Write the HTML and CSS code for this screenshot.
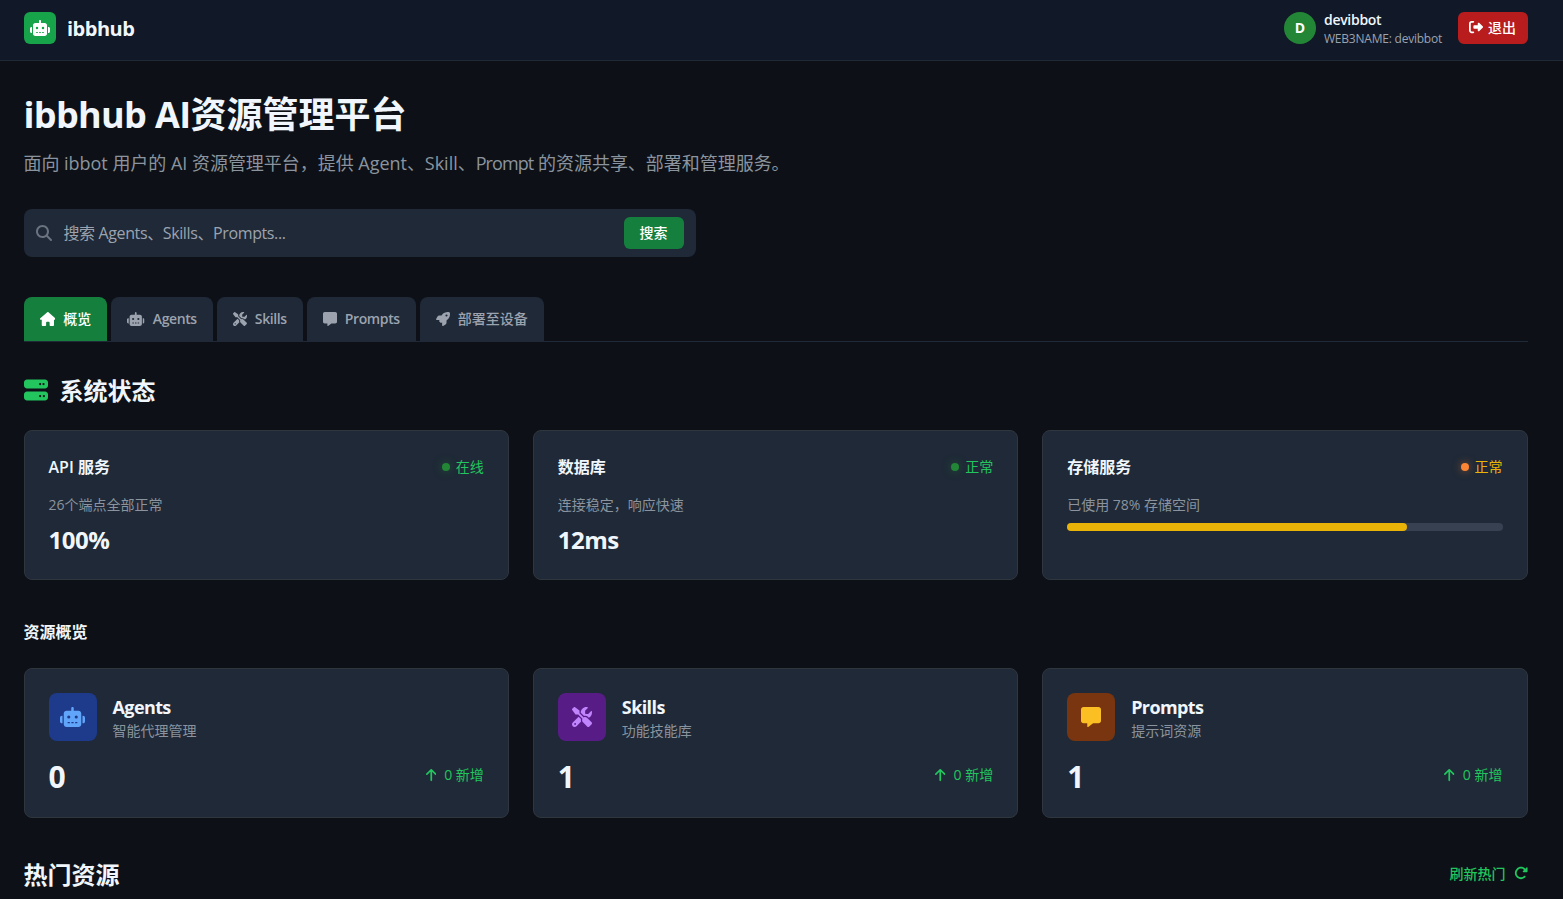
FILE: index.html
```
<!DOCTYPE html>
<html lang="zh-CN">

<head>
  <meta charset="UTF-8">
  <meta name="viewport" content="width=device-width, initial-scale=1.0">
  <title>ibbhub AI资源管理平台</title>
  <link rel="stylesheet" href="styles.css">
</head>

<body>
  <!-- icons -->
  <svg class="sprite" aria-hidden="true">
    <symbol id="robot" viewBox="0 0 640 512"><path d="M320 0c17.7 0 32 14.3 32 32V96H472c39.8 0 72 32.2 72 72V440c0 39.8-32.2 72-72 72H168c-39.8 0-72-32.2-72-72V168c0-39.8 32.2-72 72-72H288V32c0-17.7 14.3-32 32-32zM208 384c-8.8 0-16 7.2-16 16s7.2 16 16 16h32c8.8 0 16-7.2 16-16s-7.2-16-16-16H208zm96 0c-8.8 0-16 7.2-16 16s7.2 16 16 16h32c8.8 0 16-7.2 16-16s-7.2-16-16-16H304zm96 0c-8.8 0-16 7.2-16 16s7.2 16 16 16h32c8.8 0 16-7.2 16-16s-7.2-16-16-16H400zM264 256a40 40 0 1 0 -80 0 40 40 0 1 0 80 0zm152 40a40 40 0 1 0 0-80 40 40 0 1 0 0 80zM48 224H64V416H48c-26.5 0-48-21.5-48-48V272c0-26.5 21.5-48 48-48zm544 0c26.5 0 48 21.5 48 48v96c0 26.5-21.5 48-48 48H576V224h16z"/></symbol>
    <symbol id="logout" viewBox="0 0 512 512"><path d="M377.9 105.9L500.7 228.7c7.2 7.2 11.3 17.1 11.3 27.3s-4.1 20.1-11.3 27.3L377.9 406.1c-6.4 6.4-15 9.9-24 9.9c-18.7 0-33.9-15.2-33.9-33.9l0-62.1-128 0c-17.7 0-32-14.3-32-32l0-64c0-17.7 14.3-32 32-32l128 0 0-62.1c0-18.7 15.2-33.9 33.9-33.9c9 0 17.6 3.6 24 9.9zM160 96L96 96c-17.7 0-32 14.3-32 32l0 256c0 17.7 14.3 32 32 32l64 0c17.7 0 32 14.3 32 32s-14.3 32-32 32l-64 0c-53 0-96-43-96-96L0 128C0 75 43 32 96 32l64 0c17.7 0 32 14.3 32 32s-14.3 32-32 32z"/></symbol>
    <symbol id="search" viewBox="0 0 512 512"><path d="M416 208c0 45.9-14.9 88.3-40 122.7L502.6 457.4c12.5 12.5 12.5 32.8 0 45.3s-32.8 12.5-45.3 0L330.7 376c-34.4 25.2-76.8 40-122.7 40C93.1 416 0 322.9 0 208S93.1 0 208 0S416 93.1 416 208zM208 352a144 144 0 1 0 0-288 144 144 0 1 0 0 288z"/></symbol>
    <symbol id="home" viewBox="0 0 576 512"><path d="M575.8 255.5c0 18-15 32.1-32 32.1h-32l.7 160.2c0 2.7-.2 5.4-.5 8.1V472c0 22.1-17.9 40-40 40H456c-1.1 0-2.2 0-3.3-.1c-1.4 .1-2.8 .1-4.2 .1H416 392c-22.1 0-40-17.9-40-40V448 384c0-17.7-14.3-32-32-32H256c-17.7 0-32 14.3-32 32v64 24c0 22.1-17.9 40-40 40H160 128.1c-1.5 0-3-.1-4.5-.2c-1.2 .1-2.4 .2-3.6 .2H104c-22.1 0-40-17.9-40-40V360c0-.9 0-1.9 .1-2.8V287.6H32c-18 0-32-14-32-32.1c0-9 3-17 10-24L266.4 8c7-7 15-8 22-8s15 2 21 7L564.8 231.5c8 7 12 15 11 24z"/></symbol>
    <symbol id="tools" viewBox="0 0 512 512"><path d="M78.6 5C69.1-2.4 55.6-1.5 47 7L7 47c-8.5 8.5-9.4 22-2.1 31.6l80 104c4.5 5.9 11.6 9.4 19 9.4h54.1l109 109c-14.7 29-10 65.4 14.3 89.6l112 112c12.5 12.5 32.8 12.5 45.3 0l64-64c12.5-12.5 12.5-32.8 0-45.3l-112-112c-24.2-24.2-60.6-29-89.6-14.3l-109-109V104c0-7.5-3.5-14.5-9.4-19L78.6 5zM19.9 396.1C7.2 408.8 0 426.1 0 444.1C0 481.6 30.4 512 67.9 512c18 0 35.3-7.2 48-19.9L233.7 374.3c-7.8-20.9-9-43.6-3.6-65.1l-61.7-61.7L19.9 396.1zM512 144c0-10.5-1.1-20.7-3.2-30.5c-2.4-11.2-16.1-14.1-24.2-6l-63.9 63.9c-3 3-7.1 4.7-11.3 4.7H352c-8.8 0-16-7.2-16-16V102.6c0-4.2 1.7-8.3 4.7-11.3l63.9-63.9c8.1-8.1 5.2-21.8-6-24.2C388.7 1.1 378.5 0 368 0C288.5 0 224 64.5 224 144l0 .8 85.3 85.3c36-9.1 75.8 .5 104 28.7L429 274.5c49-23 83-72.8 83-130.5zM56 432a24 24 0 1 1 48 0 24 24 0 1 1 -48 0z"/></symbol>
    <symbol id="message" viewBox="0 0 512 512"><path d="M64 0C28.7 0 0 28.7 0 64V352c0 35.3 28.7 64 64 64h96v80c0 6.1 3.4 11.6 8.8 14.3s11.9 2.1 16.8-1.5L309.3 416H448c35.3 0 64-28.7 64-64V64c0-35.3-28.7-64-64-64H64z"/></symbol>
    <symbol id="rocket" viewBox="0 0 512 512"><path d="M156.6 384.9L125.7 354c-8.5-8.5-11.5-20.8-7.7-32.2c3-8.9 7-20.5 11.8-33.8L24 288c-8.6 0-16.6-4.6-20.9-12.1s-4.2-16.7 .2-24.1l52.5-88.5c13-21.9 36.5-35.3 61.9-35.3l82.3 0c2.4-4 4.8-7.7 7.2-11.3C289.1-4.1 411.1-8.1 483.9 5.3c11.6 2.1 20.6 11.2 22.8 22.8c13.4 72.9 9.3 194.8-111.4 276.7c-3.5 2.4-7.3 4.8-11.3 7.2v82.3c0 25.4-13.4 49-35.3 61.9l-88.5 52.5c-7.4 4.4-16.6 4.5-24.1 .2s-12.1-12.2-12.1-20.9V380.8c-14.1 4.9-26.4 8.9-35.7 11.9c-11.2 3.6-23.4 .5-31.8-7.8zM384 168a40 40 0 1 0 0-80 40 40 0 1 0 0 80z"/></symbol>
    <symbol id="server" viewBox="0 0 512 512"><path d="M64 32C28.7 32 0 60.7 0 96v64c0 35.3 28.7 64 64 64H448c35.3 0 64-28.7 64-64V96c0-35.3-28.7-64-64-64H64zm280 72a24 24 0 1 1 0 48 24 24 0 1 1 0-48zm48 24a24 24 0 1 1 48 0 24 24 0 1 1 -48 0zM64 288c-35.3 0-64 28.7-64 64v64c0 35.3 28.7 64 64 64H448c35.3 0 64-28.7 64-64V352c0-35.3-28.7-64-64-64H64zm280 72a24 24 0 1 1 0 48 24 24 0 1 1 0-48zm56 24a24 24 0 1 1 48 0 24 24 0 1 1 -48 0z"/></symbol>
    <symbol id="arrow-up" viewBox="0 0 384 512"><path d="M214.6 41.4c-12.5-12.5-32.8-12.5-45.3 0l-160 160c-12.5 12.5-12.5 32.8 0 45.3s32.8 12.5 45.3 0L160 141.2V448c0 17.7 14.3 32 32 32s32-14.3 32-32V141.2L329.4 246.6c12.5 12.5 32.8 12.5 45.3 0s12.5-32.8 0-45.3l-160-160z"/></symbol>
    <symbol id="refresh" viewBox="0 0 512 512"><path d="M463.5 224H472c13.3 0 24-10.7 24-24V72c0-9.7-5.8-18.5-14.8-22.2s-19.3-1.7-26.2 5.2L413.4 96.6c-87.6-86.5-228.7-86.2-315.8 1c-87.5 87.5-87.5 229.3 0 316.8s229.3 87.5 316.8 0c12.5-12.5 12.5-32.8 0-45.3s-32.8-12.5-45.3 0c-62.5 62.5-163.8 62.5-226.3 0s-62.5-163.8 0-226.3c62.2-62.2 162.7-62.5 225.3-1L327 183c-6.9 6.9-8.9 17.2-5.2 26.2s12.5 14.8 22.2 14.8H463.5z"/></symbol>
  </svg>

  <header class="header">
    <div class="brand">
      <span class="brand_logo"><svg class="icon wide"><use href="#robot"/></svg></span>
      <span class="brand_name">ibbhub</span>
    </div>
    <div class="user">
      <span class="avatar">D</span>
      <div class="user_info">
        <strong class="user_name">devibbot</strong>
        <span class="user_web3">WEB3NAME: devibbot</span>
      </div>
      <button class="btn_logout" type="button"><svg class="icon"><use href="#logout"/></svg>退出</button>
    </div>
  </header>

  <main class="container">
    <h1 class="title"><span class="latin">ibbhub AI</span>资源管理平台</h1>
    <p class="subtitle">面向 ibbot 用户的 AI 资源管理平台，提供 Agent、Skill、<span class="latin">Prompt</span> 的资源共享、部署和管理服务。</p>

    <form class="search">
      <svg class="icon"><use href="#search"/></svg>
      <input class="search_input" type="text" placeholder="搜索 Agents、Skills、Prompts...">
      <button class="btn_search" type="button">搜索</button>
    </form>

    <nav class="tabs">
      <a class="tab active"><svg class="icon home"><use href="#home"/></svg>概览</a>
      <a class="tab"><svg class="icon wide"><use href="#robot"/></svg><span class="latin">Agents</span></a>
      <a class="tab"><svg class="icon"><use href="#tools"/></svg><span class="latin">Skills</span></a>
      <a class="tab"><svg class="icon"><use href="#message"/></svg><span class="latin">Prompts</span></a>
      <a class="tab"><svg class="icon"><use href="#rocket"/></svg>部署至设备</a>
    </nav>

    <h2 class="section_title"><svg class="icon"><use href="#server"/></svg><span>系统状态</span></h2>
    <section class="cards">
      <article class="card">
        <div class="card_head">
          <h3>API 服务</h3>
          <span class="status">在线</span>
        </div>
        <p class="card_desc">26个端点全部正常</p>
        <strong class="card_value">100%</strong>
      </article>
      <article class="card">
        <div class="card_head">
          <h3>数据库</h3>
          <span class="status">正常</span>
        </div>
        <p class="card_desc">连接稳定，响应快速</p>
        <strong class="card_value">12ms</strong>
      </article>
      <article class="card">
        <div class="card_head">
          <h3>存储服务</h3>
          <span class="status warning">正常</span>
        </div>
        <p class="card_desc">已使用 78% 存储空间</p>
        <div class="progress"><div class="progress_bar" style="width: 78%"></div></div>
      </article>
    </section>

    <h3 class="overview_title">资源概览</h3>
    <section class="cards">
      <article class="card">
        <div class="resource">
          <span class="resource_icon blue"><svg class="icon wide"><use href="#robot"/></svg></span>
          <div>
            <h4>Agents</h4>
            <p>智能代理管理</p>
          </div>
        </div>
        <div class="count">
          <strong>0</strong>
          <span class="added"><svg class="icon arrow"><use href="#arrow-up"/></svg>0 新增</span>
        </div>
      </article>
      <article class="card">
        <div class="resource">
          <span class="resource_icon purple"><svg class="icon"><use href="#tools"/></svg></span>
          <div>
            <h4>Skills</h4>
            <p>功能技能库</p>
          </div>
        </div>
        <div class="count">
          <strong>1</strong>
          <span class="added"><svg class="icon arrow"><use href="#arrow-up"/></svg>0 新增</span>
        </div>
      </article>
      <article class="card">
        <div class="resource">
          <span class="resource_icon orange"><svg class="icon"><use href="#message"/></svg></span>
          <div>
            <h4>Prompts</h4>
            <p>提示词资源</p>
          </div>
        </div>
        <div class="count">
          <strong>1</strong>
          <span class="added"><svg class="icon arrow"><use href="#arrow-up"/></svg>0 新增</span>
        </div>
      </article>
    </section>

    <div class="hot">
      <h2>热门资源</h2>
      <button class="btn_refresh" type="button">刷新热门<svg class="icon"><use href="#refresh"/></svg></button>
    </div>
  </main>
</body>

</html>
```
FILE: styles.css
```
* {
  box-sizing: border-box;
  margin: 0;
  padding: 0;
}

body {
  background: #0d1117;
  color: #f0f6fc;
  font-family: "Open Sans", "Noto Sans CJK SC", sans-serif;
  font-size: 16px;
  line-height: 24px;
}

button,
input {
  border: 0;
  font-family: inherit;
}

.sprite {
  display: none;
}

.icon {
  flex: none;
  width: 1em;
  height: 1em;
  fill: currentColor;
}

.icon.wide {
  width: 1.25em;
}

.icon.home {
  width: 1.125em;
}

.icon.arrow {
  width: 0.75em;
}

/* header */
.header {
  display: flex;
  justify-content: space-between;
  height: 61px;
  padding: 8px 35px 12px 24px;
  background: #111827;
  border-bottom: 1px solid #1f2937;
}

.brand,
.user {
  display: flex;
  align-items: center;
}

.brand {
  gap: 11px;
}

.brand_logo {
  display: flex;
  align-items: center;
  justify-content: center;
  width: 32px;
  height: 32px;
  padding-right: 1px;
  border-radius: 6px;
  background: #16a34a;
  color: white;
}

.brand_name {
  padding-top: 2px;
  font-size: 20px;
  font-weight: 700;
  letter-spacing: -0.5px;
}

.avatar {
  display: flex;
  align-items: center;
  justify-content: center;
  width: 32px;
  height: 32px;
  margin-right: 8px;
  border-radius: 50%;
  background: #238636;
  color: white;
  font-size: 14px;
  font-weight: 700;
}

.user_info {
  width: 118px;
  margin-right: 16px;
  white-space: nowrap;
}

.user_name,
.user_web3 {
  display: block;
}

.user_name {
  font-size: 14px;
  font-weight: 600;
  line-height: 20px;
  letter-spacing: -0.3px;
}

.user_web3 {
  color: #9ca3af;
  font-size: 12px;
  line-height: 17px;
  letter-spacing: -0.22px;
}

.btn_logout {
  display: flex;
  align-items: center;
  justify-content: center;
  gap: 5px;
  width: 70px;
  height: 32px;
  padding: 0 1px 2px 0;
  border-radius: 6px;
  background: #b91c1c;
  color: white;
  font-size: 14px;
  font-weight: 500;
}

/* content */
.container {
  padding: 34px 35.5px 8px 23.5px;
}

.title {
  font-size: 36px;
  font-weight: 700;
  line-height: 40px;
}

.title .latin {
  letter-spacing: -0.65px;
}

.subtitle {
  margin: 14px 0 32px;
  color: #8b949e;
  font-size: 18px;
  line-height: 28px;
  letter-spacing: -0.03px;
}

.subtitle .latin {
  letter-spacing: -0.9px;
}

.search {
  display: flex;
  align-items: center;
  gap: 12px;
  width: 672px;
  height: 48px;
  margin-bottom: 40px;
  padding: 0 12px;
  border-radius: 8px;
  background: #1f2937;
  color: #6b7280;
}

.search_input {
  flex: 1;
  background: none;
  outline: none;
  color: #f0f6fc;
  font-size: 16px;
}

.search_input::placeholder {
  color: #9ca3af;
  letter-spacing: -0.38px;
}

.btn_search {
  width: 60px;
  height: 32px;
  padding-bottom: 2px;
  border-radius: 6px;
  background: #15803d;
  color: white;
  font-size: 14px;
  font-weight: 500;
}

.tabs {
  display: flex;
  gap: 4px;
  height: 45px;
  margin-bottom: 32px;
  border-bottom: 1px solid #1f2937;
}

.tab {
  display: flex;
  align-items: center;
  gap: 8px;
  height: 44px;
  padding: 0 16px;
  border-radius: 8px 8px 0 0;
  background: #1f2937;
  color: #9ca3af;
  font-size: 14px;
  font-weight: 500;
}

.tab .latin {
  font-weight: 600;
  letter-spacing: -0.38px;
}

.tab.active {
  background: #15803d;
  color: white;
}

.section_title {
  display: flex;
  align-items: center;
  gap: 12px;
  height: 32px;
  margin-bottom: 24px;
  font-size: 24px;
  line-height: 32px;
}

.section_title span {
  padding-top: 2px;
}

.section_title .icon {
  color: #22c55e;
}

/* cards */
.cards {
  display: grid;
  grid-template-columns: repeat(3, 1fr);
  gap: 24px;
}

.card {
  height: 150px;
  padding: 24px;
  border: 1px solid #30363d;
  border-radius: 8px;
  background: #1f2937;
}

.card_head {
  display: flex;
  align-items: center;
  justify-content: space-between;
  margin-bottom: 16px;
}

.card_head h3 {
  font-size: 16px;
  font-weight: 600;
}

.status {
  display: flex;
  align-items: center;
  gap: 6px;
  color: #22c55e;
  font-size: 14px;
}

.status::before {
  content: "";
  width: 8px;
  height: 8px;
  border-radius: 50%;
  background: #238636;
  box-shadow: 0 0 8px rgba(35, 134, 54, 0.5);
}

.status.warning {
  color: #eab308;
}

.status.warning::before {
  background: #fb8535;
  box-shadow: 0 0 8px rgba(251, 133, 53, 0.5);
}

.card_desc {
  margin-bottom: 8px;
  color: #8b949e;
  font-size: 14px;
  line-height: 20px;
}

.card_value {
  display: block;
  font-size: 24px;
  line-height: 34px;
  letter-spacing: -0.5px;
}

.progress {
  height: 8px;
  border-radius: 4px;
  background: #374151;
}

.progress_bar {
  height: 100%;
  border-radius: 4px;
  background: #eab308;
}

.overview_title {
  margin: 40px 0 24px;
  font-size: 16px;
}

.resource {
  display: flex;
  gap: 16px;
  margin-bottom: 16px;
}

.resource_icon {
  display: flex;
  align-items: center;
  justify-content: center;
  width: 48px;
  height: 48px;
  border-radius: 8px;
  font-size: 20px;
}

.resource_icon.blue {
  background: #1e3a8a;
  color: #60a5fa;
}

.resource_icon.purple {
  background: #581c87;
  color: #c084fc;
}

.resource_icon.orange {
  background: #78350f;
  color: #fbbf24;
}

.resource h4 {
  font-size: 18px;
  line-height: 28px;
  letter-spacing: -0.6px;
}

.resource p {
  color: #8b949e;
  font-size: 14px;
  line-height: 20px;
}

.count {
  display: flex;
  align-items: flex-start;
  justify-content: space-between;
}

.count strong {
  font-size: 30px;
  line-height: 39px;
}

.added {
  display: flex;
  align-items: center;
  gap: 8px;
  color: #22c55e;
  font-size: 14px;
  line-height: 36px;
}

.hot {
  display: flex;
  align-items: center;
  justify-content: space-between;
  margin-top: 41px;
}

.hot h2 {
  font-size: 24px;
  line-height: 32px;
}

.btn_refresh {
  display: flex;
  align-items: center;
  gap: 8px;
  padding-bottom: 4px;
  background: none;
  color: #22c55e;
  font-size: 14px;
  font-weight: 500;
}
```
